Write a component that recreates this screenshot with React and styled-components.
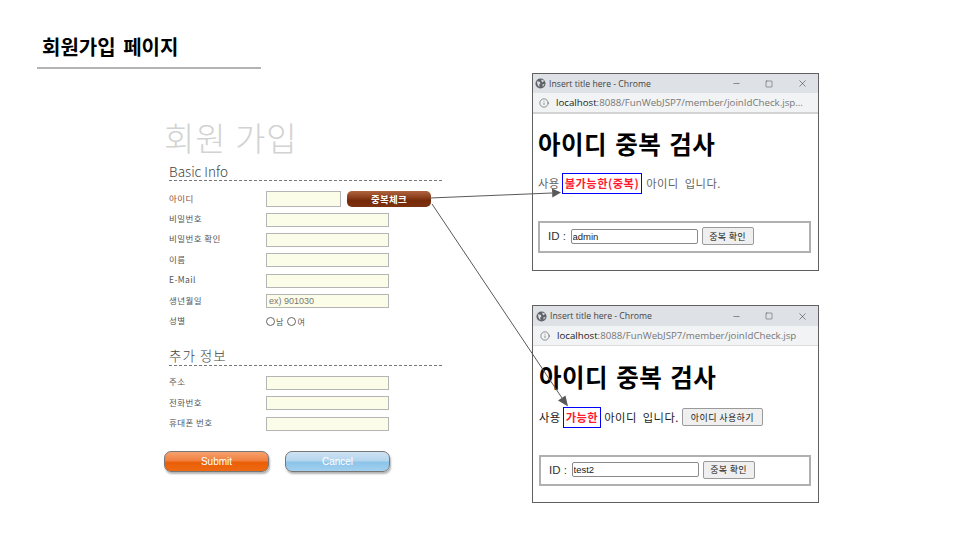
import React from 'react';
import styled, { createGlobalStyle } from 'styled-components';
import { Info, Minus, Square, X } from 'lucide-react';

const sans = `'Noto Sans CJK KR', 'Noto Sans', sans-serif`;
const arial = `'Liberation Sans', 'Noto Sans CJK KR', sans-serif`;

const GlobalStyle = createGlobalStyle`
  html, body { margin: 0; padding: 0; background: #fff; }
  * { box-sizing: border-box; }
`;

const Page = styled.div`
  position: relative;
  width: 960px;
  height: 540px;
  overflow: hidden;
  font-family: ${sans};
`;

const Header = styled.header`
  width: 224px;
  height: 69px;
  margin-left: 37px;
  padding: 33px 0 0 5px;
  border-bottom: 2px solid #b4b4b4;
`;

const HeaderTitle = styled.h2`
  margin: 0;
  font-size: 20px;
  line-height: 28px;
  font-weight: 700;
  word-spacing: 3px;
  color: #000;
`;

const Main = styled.main`
  display: flex;
  align-items: flex-start;
  margin-top: 4px;
`;

const FormColumn = styled.form`
  width: 278px;
  margin: 47px 0 0 164px;
`;

const FormTitle = styled.h1`
  margin: 0 0 7px;
  font-size: 33px;
  line-height: 35px;
  font-weight: 300;
  letter-spacing: 1px;
  color: #d2d2d2;
`;

const SectionTitle = styled.h3`
  margin: 0 0 0 5px;
  height: ${p => p.$height}px;
  font-size: 13.5px;
  line-height: 19px;
  font-weight: 300;
  letter-spacing: ${p => p.$spacing || 0}px;
  color: #444;
  border-bottom: 1px dashed #777;
`;

const Section = styled.section`
  margin-bottom: ${p => p.$gap}px;
`;

const Rows = styled.div`
  padding: ${p => p.$top}px 0 0 5px;
`;

const Row = styled.div`
  display: flex;
  align-items: center;
  height: 20.4px;
`;

const Label = styled.label`
  width: 97px;
  padding-bottom: 3px;
  font-size: 8.5px;
  letter-spacing: 0.4px;
  color: ${p => (p.$accent ? '#8a4b3a' : '#555')};
`;

const TextField = styled.input`
  width: ${p => p.$width || 123}px;
  height: ${p => p.$height || 14}px;
  padding: 0 2px;
  border: 1px solid #b5b5b5;
  background: #fcfde9;
  font-family: ${arial};
  font-size: 9px;
  outline: none;
  &::placeholder { color: #777; opacity: 1; }
`;

const CheckButton = styled.button`
  width: 84px;
  height: 16px;
  margin-left: 6px;
  padding: 0;
  border: none;
  border-radius: 5px;
  background: linear-gradient(#b0643f 0%, #8c3f1c 40%, #762a08 60%, #7c3110 100%);
  color: #fff;
  font-family: ${sans};
  font-size: 9.5px;
  letter-spacing: 0.3px;
  font-weight: 700;
`;

const GenderGroup = styled.div`
  display: flex;
  align-items: center;
  gap: 1px;
  font-size: 8px;
  color: #555;
`;

const Radio = styled.input.attrs({ type: 'radio' })`
  appearance: none;
  width: 9px;
  height: 9px;
  margin: 0;
  border: 1px solid #666;
  border-radius: 50%;
  background: #fff;
  &:not(:first-child) { margin-left: 3px; }
`;

const Actions = styled.div`
  display: flex;
  gap: 16px;
`;

const ActionButton = styled.button`
  width: 105px;
  height: 21px;
  padding: 0;
  border: 1px solid #777;
  border-radius: 7px;
  box-shadow: 1px 2px 2px rgba(0, 0, 0, 0.3);
  color: #fff;
  font-family: ${arial};
  font-size: 10px;
  background: ${p =>
    p.$kind === 'submit'
      ? 'linear-gradient(#f6a26e 0%, #f08040 45%, #ea5f08 55%, #ee6a12 100%)'
      : 'linear-gradient(#cfe3f3 0%, #b5d5ee 45%, #8cc4ea 55%, #a2d0ee 100%)'};
`;

const WindowColumn = styled.div`
  display: flex;
  flex-direction: column;
  gap: 34px;
  margin-left: 90px;
`;

const WindowFrame = styled.div`
  width: 287px;
  height: 198px;
  border: 1px solid #606060;
  background: #fff;
  display: flex;
  flex-direction: column;
`;

const TitleBar = styled.div`
  display: flex;
  align-items: center;
  height: ${p => (p.$compact ? 19 : 20)}px;
  padding: 0 10px 0 ${p => (p.$compact ? 2 : 3)}px;
  background: #dee1e6;
  font-family: 'Open Sans', sans-serif;
  font-size: 8.7px;
  color: #444;
`;

const TitleText = styled.span`
  flex: 1;
  margin-left: 3px;
`;

const WindowControls = styled.div`
  display: flex;
  gap: 24px;
  align-items: center;
  color: #444;
`;

const AddressBar = styled.div`
  display: flex;
  align-items: center;
  height: ${p => (p.$compact ? 21 : 20)}px;
  padding-left: ${p => (p.$compact ? 6 : 7)}px;
  background: #f1f3f4;
  border-bottom: ${p => (p.$compact ? '2px solid #d3d3d3' : '1px solid #dcdcdc')};
  font-family: 'Open Sans', sans-serif;
  font-size: 9.7px;
  color: #777;
  white-space: nowrap;
  b { font-weight: 400; color: #222; }
`;

const AddressText = styled.span`
  margin-left: 7px;
`;

const WindowBody = styled.div`
  flex: 1;
  padding: ${p => p.$top}px 0 0 ${p => p.$left}px;
`;

const WindowHeading = styled.h1`
  margin: 0;
  font-size: 24.5px;
  line-height: 34px;
  font-weight: 700;
  color: #000;
  letter-spacing: 0.5px;
  word-spacing: 2px;
`;

const Message = styled.div`
  display: flex;
  align-items: center;
  height: 22px;
  margin-top: ${p => p.$top}px;
  font-size: 11.3px;
  letter-spacing: 0.45px;
  word-spacing: 3px;
  color: ${p => (p.$muted ? '#666' : '#222')};
  white-space: pre;
`;

const Highlight = styled.span`
  display: inline-block;
  height: 21px;
  margin: 0 ${p => p.$after}px 0 2px;
  padding: 0 2px;
  border: 1px solid #0000ff;
  color: #ff1a2e;
  font-weight: 700;
  line-height: 19px;
`;

const UseButton = styled.button`
  height: 18px;
  margin-left: 3px;
  padding: 0;
  width: 81px;
  border: 1px solid #9a9a9a;
  border-radius: 2px;
  background: #efefef;
  font-family: ${sans};
  font-size: 9px;
  letter-spacing: 0.4px;
  word-spacing: 0;
  color: #222;
`;

const IdFieldset = styled.fieldset`
  display: flex;
  align-items: center;
  width: ${p => p.$width}px;
  height: ${p => p.$height}px;
  margin: ${p => p.$top}px 0 0 0;
  padding: 0 0 2px 8px;
  border: 2px solid #b0b0b0;
`;

const IdLabel = styled.span`
  width: 22.5px;
  font-family: ${arial};
  font-size: 11.5px;
  color: #333;
`;

const IdInput = styled.input`
  width: 127px;
  height: 15px;
  padding: 0 1px;
  border: 1px solid #8a8a8a;
  border-radius: 2px;
  font-family: ${arial};
  font-size: 9.5px;
  color: #222;
  outline: none;
`;

const IdButton = styled.button`
  width: 52px;
  height: 18px;
  margin-left: 4px;
  padding: 0;
  border: 1px solid #9a9a9a;
  border-radius: 2px;
  background: #efefef;
  font-family: ${sans};
  font-size: 9px;
  letter-spacing: 0.3px;
  color: #222;
`;

const ArrowLayer = styled.svg`
  position: absolute;
  inset: 0;
  pointer-events: none;
`;

const GlobeIcon = () => (
  <svg width="11" height="11" viewBox="0 0 12 12">
    <circle cx="6" cy="6" r="5.5" fill="#5f6368" />
    <path d="M2 3.5l3 .5 1 2-1.5 1 .5 3-2-2zM7 1.5l3 1.5-1.5 1.5-1.5-1zM8 7l2.5-.5-2 3z" fill="#dee1e6" />
  </svg>
);

const basicRows = [
  { label: '비밀번호' },
  { label: '비밀번호 확인' },
  { label: '이름' },
  { label: 'E-Mail' },
  { label: '생년월일', placeholder: 'ex) 901030' }
];

const extraRows = ['주소', '전화번호', '휴대폰 번호'];

const BrowserWindow = ({ url, compact, bodyTop, bodyLeft, children }) => (
  <WindowFrame>
    <TitleBar $compact={compact}>
      <GlobeIcon />
      <TitleText>Insert title here - Chrome</TitleText>
      <WindowControls>
        <Minus size={9} strokeWidth={1.5} />
        <Square size={8} strokeWidth={1.5} />
        <X size={11} strokeWidth={1.3} />
      </WindowControls>
    </TitleBar>
    <AddressBar $compact={compact}>
      <Info size={10} strokeWidth={1.5} color="#555" />
      <AddressText>
        <b>localhost</b>:8088/FunWebJSP7/member/{url}
      </AddressText>
    </AddressBar>
    <WindowBody $top={bodyTop} $left={bodyLeft}>
      {children}
    </WindowBody>
  </WindowFrame>
);

const App = () => (
  <Page>
    <GlobalStyle />
    <Header>
      <HeaderTitle>회원가입 페이지</HeaderTitle>
    </Header>
    <Main>
      <FormColumn>
        <FormTitle>회원 가입</FormTitle>
        <Section $gap={14}>
          <SectionTitle $height={19}>Basic Info</SectionTitle>
          <Rows $top={8}>
            <Row>
              <Label $accent>아이디</Label>
              <TextField $width={75} $height={16} />
              <CheckButton type="button">중복체크</CheckButton>
            </Row>
            {basicRows.map(row => (
              <Row key={row.label}>
                <Label>{row.label}</Label>
                <TextField placeholder={row.placeholder} />
              </Row>
            ))}
            <Row>
              <Label>성별</Label>
              <GenderGroup>
                <Radio name="gender" />남
                <Radio name="gender" />여
              </GenderGroup>
            </Row>
          </Rows>
        </Section>
        <Section $gap={17}>
          <SectionTitle $height={20} $spacing={1}>추가 정보</SectionTitle>
          <Rows $top={7}>
            {extraRows.map(label => (
              <Row key={label}>
                <Label>{label}</Label>
                <TextField />
              </Row>
            ))}
          </Rows>
        </Section>
        <Actions>
          <ActionButton type="button" $kind="submit">Submit</ActionButton>
          <ActionButton type="button" $kind="cancel">Cancel</ActionButton>
        </Actions>
      </FormColumn>
      <WindowColumn>
        <BrowserWindow url="joinIdCheck.jsp..." compact bodyTop={13} bodyLeft={5}>
          <WindowHeading>아이디 중복 검사</WindowHeading>
          <Message $top={11} $muted>
            사용
            <Highlight $after={4}>불가능한(중복)</Highlight>
            아이디 입니다.
          </Message>
          <IdFieldset $width={273} $height={32} $top={27}>
            <IdLabel>ID :</IdLabel>
            <IdInput defaultValue="admin" />
            <IdButton type="button">중복 확인</IdButton>
          </IdFieldset>
        </BrowserWindow>
        <BrowserWindow url="joinIdCheck.jsp" bodyTop={14} bodyLeft={6}>
          <WindowHeading>아이디 중복 검사</WindowHeading>
          <Message $top={12}>
            사용
            <Highlight $after={3}>가능한</Highlight>
            아이디 입니다.
            <UseButton type="button">아이디 사용하기</UseButton>
          </Message>
          <IdFieldset $width={272} $height={31} $top={27}>
            <IdLabel>ID :</IdLabel>
            <IdInput defaultValue="test2" />
            <IdButton type="button">중복 확인</IdButton>
          </IdFieldset>
        </BrowserWindow>
      </WindowColumn>
    </Main>
    <ArrowLayer width="960" height="540" viewBox="0 0 960 540">
      <path d="M430 198L552 193" stroke="#595959" strokeWidth="1" fill="none" />
      <path d="M561 192.6L552 188.5L552.3 197.5Z" fill="#595959" />
      <path d="M432 204L562 398" stroke="#595959" strokeWidth="1" fill="none" />
      <path d="M568 406.5L565.5 395.5L558 400.5Z" fill="#595959" />
    </ArrowLayer>
  </Page>
);

export default App;
